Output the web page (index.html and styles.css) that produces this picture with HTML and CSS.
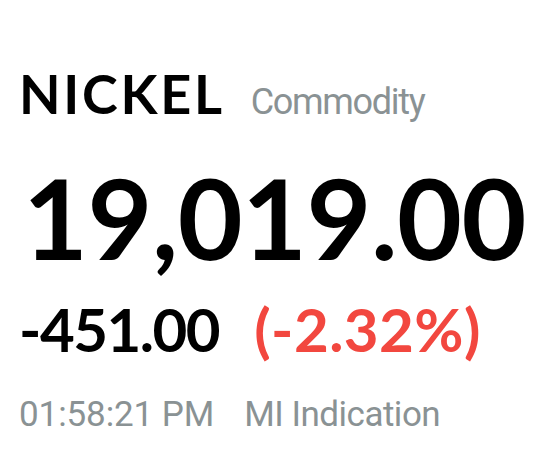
FILE: index.html
```html
<!DOCTYPE html>
<html>
<head>
<meta charset="utf-8">
<link rel="stylesheet" href="styles.css">
</head>
<body>
<div class="quote">
  <div class="title-row">
    <span class="name">NICKEL</span>
    <span class="type">Commodity</span>
  </div>
  <div class="price">19,019.00</div>
  <div class="change-row">
    <span class="change">-451.00</span>
    <span class="pct">(-2.32%)</span>
  </div>
  <div class="meta-row">
    <span class="time">01:58:21 PM</span>
    <span class="source">MI Indication</span>
  </div>
</div>
</body>
</html>
```
FILE: styles.css
```css
html, body {
  margin: 0;
  padding: 0;
  background: #ffffff;
}
.quote {
  padding: 64px 0 0 19px;
  font-family: "Lato", "Noto Sans", sans-serif;
}
.title-row {
  display: flex;
  align-items: baseline;
  gap: 26px;
  height: 60px;
}
.name {
  font-size: 54px;
  font-weight: 700;
  letter-spacing: 2.7px;
  color: #000;
  line-height: 60px;
}
.type {
  font-family: "Roboto", sans-serif;
  font-size: 36px;
  letter-spacing: -1.3px;
  color: #8a9294;
}
.price {
  font-size: 112px;
  font-weight: 700;
  letter-spacing: -0.5px;
  line-height: 120px;
  color: #000;
  margin-top: 33px;
  margin-left: 4px;
}
.change-row {
  display: flex;
  align-items: baseline;
  gap: 35px;
  font-size: 60px;
  font-weight: 700;
  line-height: 64px;
  margin-top: 20px;
}
.change {
  color: #000;
  letter-spacing: -1.5px;
}
.pct {
  color: #f2473f;
  letter-spacing: 0.45px;
}
.meta-row {
  display: flex;
  gap: 30px;
  font-family: "Roboto", sans-serif;
  font-size: 35px;
  line-height: 40px;
  color: #8a9294;
  margin-top: 34px;
}
.time { letter-spacing: -0.1px; }
.source { letter-spacing: -0.5px; }
```
